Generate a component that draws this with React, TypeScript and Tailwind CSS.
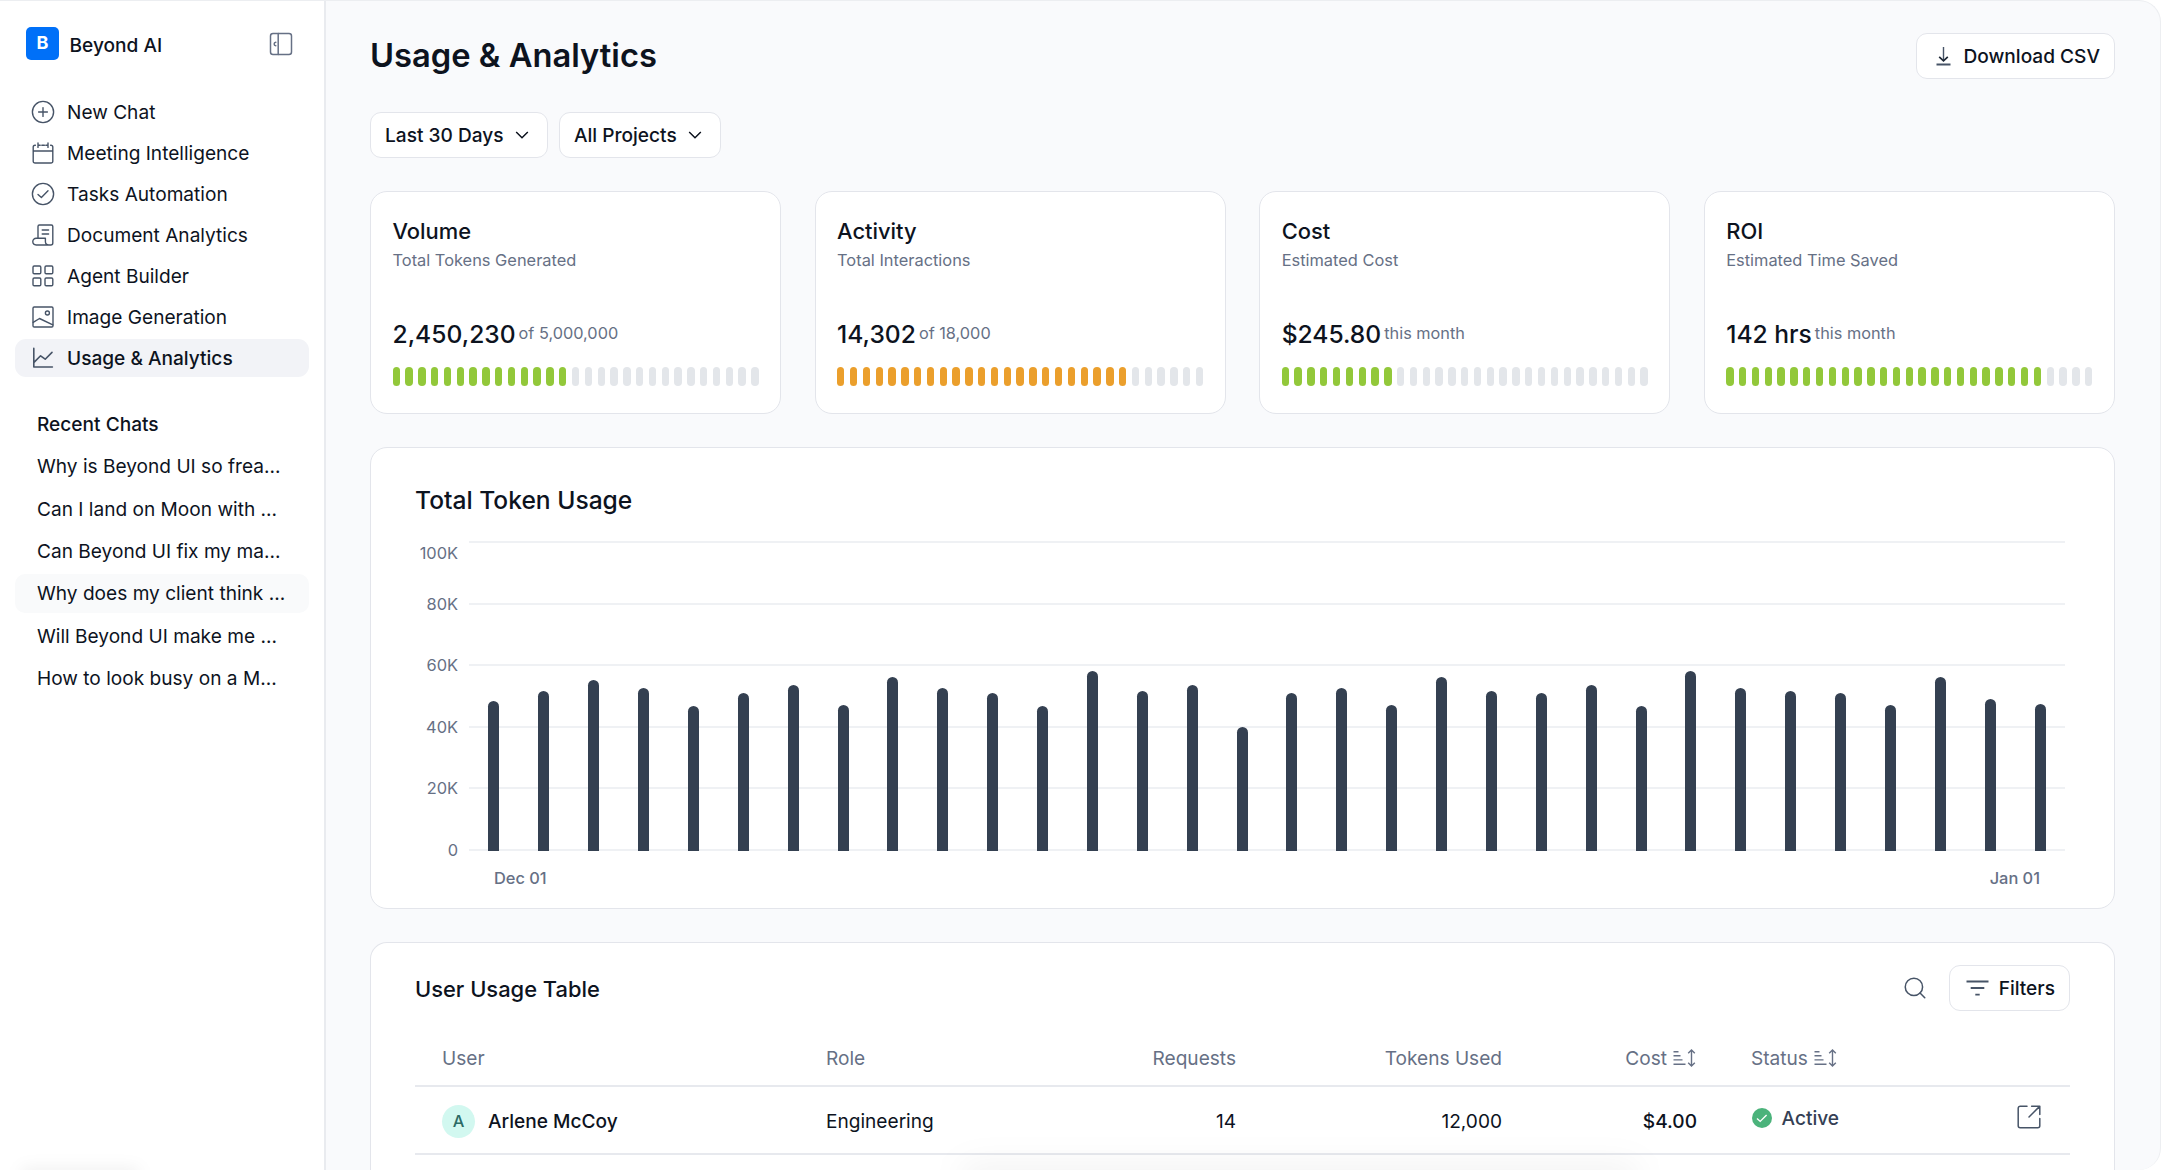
import type { ReactNode } from "react";
import { Search } from "lucide-react";

type IconProps = { className?: string };

function Svg({
  children,
  className = "size-[24px]",
  strokeWidth = 1.4,
}: {
  children: ReactNode;
  className?: string;
  strokeWidth?: number;
}) {
  return (
    <svg
      className={`shrink-0 ${className}`}
      viewBox="0 0 24 24"
      fill="none"
      stroke="currentColor"
      strokeWidth={strokeWidth}
      strokeLinecap="round"
      strokeLinejoin="round"
    >
      {children}
    </svg>
  );
}

const SidebarIcon = ({ className }: IconProps) => (
  <Svg className={className} strokeWidth={1.5}>
    <rect x="1.5" y="1.5" width="21" height="21" rx="2.5" />
    <path d="M9.2 1.5v21M6.8 10.2C4.6 10.4 4.6 13.6 6.8 13.8" />
  </Svg>
);

const NewChatIcon = () => (
  <Svg>
    <circle cx="12" cy="12" r="10.6" />
    <path d="M12 7.6v8.8M7.6 12h8.8" />
  </Svg>
);

const MeetingIcon = () => (
  <Svg>
    <path d="M4.4 4.2H4a1.8 1.8 0 0 0-1.8 1.8v14.2A1.8 1.8 0 0 0 4 22h16a1.8 1.8 0 0 0 1.8-1.8V6A1.8 1.8 0 0 0 20 4.2h-.4M2.2 10h19.6M7 2v4.4M17 2v4.4M7 4.2h2.2M10.8 4.2h2.6M14.8 4.2H17" />
  </Svg>
);

const TasksIcon = () => (
  <Svg>
    <circle cx="12" cy="12" r="10.6" />
    <path d="m7 12.4 3.4 3.2 6.6-6.8" />
  </Svg>
);

const DocumentIcon = () => (
  <Svg>
    <path d="M7 15V3.4A1.4 1.4 0 0 1 8.4 2h12a1.4 1.4 0 0 1 1.4 1.4V20a2 2 0 0 1-2 2H5.2a3.2 3.2 0 0 1 0-6.800h9.200v3.400a3.400 3.400 0 0 0 3.400 3.400M11.200 7h6.400M11.200 11h6.400" />
  </Svg>
);

const AgentIcon = () => (
  <Svg>
    <rect x="2" y="2" width="7.8" height="7.8" rx="1.2" />
    <rect x="14" y="2" width="7.8" height="7.8" rx="1.2" />
    <rect x="2" y="14" width="7.8" height="7.8" rx="1.2" />
    <rect x="14" y="14" width="7.8" height="7.8" rx="1.2" />
  </Svg>
);

const ImageIcon = () => (
  <Svg>
    <rect x="2" y="2" width="20" height="20" rx="1.2" />
    <circle cx="16.4" cy="8" r="2" />
    <path d="m2.2 17.4 6.3-3.900 13.300 6.300" />
  </Svg>
);

const UsageIcon = () => (
  <Svg strokeWidth={1.6}>
    <path d="M2.8 2.4V21h18.6M3 16.4l6.6-6.600 4.600 3.400L21 6.400" />
  </Svg>
);

const ChevronIcon = () => (
  <svg className="size-[20px]" viewBox="0 0 20 20" fill="none" stroke="currentColor" strokeWidth="1.5">
    <path d="m4.2 7 5.8 5.7L15.8 7" />
  </svg>
);

const DownloadIcon = () => (
  <svg className="h-[19px] w-[15px]" viewBox="0 0 15 19" fill="none" stroke="currentColor">
    <path d="M7.5 0v13.6" strokeWidth="1.4" />
    <path d="m3.2 9.800 4.300 4 4.300-4" stroke="#1d2735" strokeWidth="1.7" />
    <path d="M.5 17.4h14" strokeWidth="2" />
  </svg>
);

const FilterIcon = () => (
  <svg className="h-[16px] w-[23px]" viewBox="0 0 23 16" fill="none" stroke="currentColor" strokeWidth="1.8">
    <path d="M.5 1.5h22M4.7 8h13.600M9.300 14.600h4.400" />
  </svg>
);

const SortIcon = () => (
  <svg className="h-[18px] w-[23px]" viewBox="0 0 23 18" fill="none" stroke="currentColor" strokeWidth="1.4">
    <path d="M.5 2.7h5M.5 6.8h7M.5 10.9h9M.5 15.300h12" />
    <path d="M18.5 1.2v15.600M15.200 4.200l3.300-3.200 3.300 3.200M15.200 13.800l3.300 3.200 3.300-3.200" />
  </svg>
);

const OpenIcon = () => (
  <Svg strokeWidth={1.5}>
    <path d="M10 1.2H3.2a2 2 0 0 0-2 2v17.600a2 2 0 0 0 2 2h17.600a2 2 0 0 0 2-2V13.400M14.600 1.200h8.200v8.400M22.600 1.400 12 12" />
  </Svg>
);

const CheckIcon = () => (
  <svg className="size-[20px]" viewBox="0 0 20 20" fill="none">
    <circle cx="10" cy="10" r="10" fill="#4bb37b" />
    <path d="m5 10.4 3.2 3 6.400-6.400" stroke="#fff" strokeWidth="1.4" />
  </svg>
);

const NAV = [
  { label: "New Chat", icon: <NewChatIcon /> },
  { label: "Meeting Intelligence", icon: <MeetingIcon /> },
  { label: "Tasks Automation", icon: <TasksIcon /> },
  { label: "Document Analytics", icon: <DocumentIcon /> },
  { label: "Agent Builder", icon: <AgentIcon /> },
  { label: "Image Generation", icon: <ImageIcon /> },
  { label: "Usage & Analytics", icon: <UsageIcon />, active: true },
];

const CHATS = [
  "Why is Beyond UI so frea...",
  "Can I land on Moon with ...",
  "Can Beyond UI fix my ma...",
  "Why does my client think ...",
  "Will Beyond UI make me ...",
  "How to look busy on a M...",
];

const METER_BARS = 29;

const STATS = [
  { title: "Volume", desc: "Total Tokens Generated", value: "2,450,230", note: "of 5,000,000", filled: 14, color: "bg-[#92c83a]" },
  { title: "Activity", desc: "Total Interactions", value: "14,302", note: "of 18,000", filled: 23, color: "bg-[#eb9f2c]" },
  { title: "Cost", desc: "Estimated Cost", value: "$245.80", note: "this month", filled: 9, color: "bg-[#92c83a]" },
  { title: "ROI", desc: "Estimated Time Saved", value: "142 hrs", note: "this month", filled: 25, color: "bg-[#92c83a]" },
];

// thousands of tokens per day
const TOKENS = [
  48.3, 51.5, 55.2, 52.6, 46.8, 50.9, 53.5, 47.2, 56.1, 52.6, 50.9, 46.8, 58.1, 51.5, 53.5, 39.9,
  50.9, 52.6, 47.2, 56.1, 51.5, 50.9, 53.5, 46.8, 58.1, 52.6, 51.5, 50.9, 47.2, 56.1, 49, 47.5,
];

function Sidebar() {
  return (
    <aside className="flex w-[326px] shrink-0 flex-col border-r-2 border-[#e9ebef] bg-white px-[15px] pt-[26px]">
      <div className="flex h-[33px] items-center pr-[16px] pl-[11px]">
        <div className="flex size-[33px] items-center justify-center rounded-[5px] bg-[#0070f8] pb-[2px] text-[18px] font-bold text-white">
          B
        </div>
        <span className="mt-[4px] ml-[10.5px] text-[19.1px] font-medium">Beyond AI</span>
        <SidebarIcon className="ml-auto size-[24px] text-[#667085]" />
      </div>

      <nav className="mt-[33px] flex flex-col gap-[3px]">
        {NAV.map((item) => (
          <a
            key={item.label}
            className={`flex h-[38px] items-center gap-[12px] rounded-[11px] pl-[16px] text-[19.1px] ${
              item.active ? "bg-[#f2f3f7] font-medium" : ""
            }`}
          >
            <span className="text-[#475467]">{item.icon}</span>
            {item.label}
          </a>
        ))}
      </nav>

      <h2 className="mt-[32px] pl-[22px] text-[19.1px] leading-[30px] font-medium">Recent Chats</h2>
      <ul className="mt-[8px] flex flex-col gap-[2.9px]">
        {CHATS.map((chat, i) => (
          <li
            key={chat}
            className={`flex h-[39.4px] items-center rounded-[10px] pl-[22px] text-[19.1px] whitespace-nowrap ${
              i === 3 ? "bg-[#f9fafb]" : ""
            }`}
          >
            {chat}
          </li>
        ))}
      </ul>
    </aside>
  );
}

function Dropdown({ label }: { label: string }) {
  return (
    <button className="flex h-[46px] items-center gap-[8.5px] rounded-[11px] border border-[#e3e5eb] bg-white pr-[15px] pl-[14px] text-[19.1px] font-medium">
      {label}
      <ChevronIcon />
    </button>
  );
}

function StatCard({ stat }: { stat: (typeof STATS)[number] }) {
  return (
    <div className="h-[223px] rounded-[17px] border border-[#e3e5eb] bg-white px-[21.5px] pt-[23.5px]">
      <h3 className="text-[21.9px] leading-[30px] font-medium">{stat.title}</h3>
      <p className="mt-[3px] text-[16.4px] leading-[22px] text-[#667085]">{stat.desc}</p>
      <div className="mt-[46px] flex items-center gap-[3px]">
        <span className="text-[24.6px] leading-[34px] font-medium">{stat.value}</span>
        <span className="text-[16.3px] text-[#667085]">{stat.note}</span>
      </div>
      <div className="mt-[16.5px] flex justify-between">
        {Array.from({ length: METER_BARS }, (_, i) => (
          <span
            key={i}
            className={`h-[19px] w-[7.4px] rounded-full ${i < stat.filled ? stat.color : "bg-[#e3e6ea]"}`}
          />
        ))}
      </div>
    </div>
  );
}

function UsageChart() {
  return (
    <section className="mt-[33px] h-[462px] rounded-[17px] border border-[#e3e5eb] bg-white pt-[35px] pr-[49px] pl-[44px]">
      <h2 className="text-[24.6px] leading-[34px] font-medium">Total Token Usage</h2>
      <div className="mt-[24px] flex">
        <div className="flex h-[309px] w-[54px] flex-col justify-between pr-[11px] text-right text-[16.4px] leading-[1px] text-[#667085]">
          <span className="mt-[12px]">100K</span>
          <span className="mt-[-11px]">80K</span>
          <span>60K</span>
          <span>40K</span>
          <span>20K</span>
          <span className="mb-[-1px]">0</span>
        </div>
        <div className="grid h-[310px] flex-1">
          <div className="col-start-1 row-start-1 flex flex-col justify-between">
            {[100, 80, 60, 40, 20, 0].map((tick) => (
              <div key={tick} className="h-[2px] bg-[#eff1f4]" />
            ))}
          </div>
          <div className="col-start-1 row-start-1 flex items-end">
            {TOKENS.map((value, i) => (
              <div key={i} className="flex h-full flex-1 items-end justify-center">
                <div className="w-[11px] rounded-t-full bg-[#344051]" style={{ height: `${value}%` }} />
              </div>
            ))}
          </div>
        </div>
      </div>
      <div className="mt-[15px] flex justify-between pr-[25px] pl-[79px] text-[16.4px] leading-[24px] font-medium text-[#667085]">
        <span>Dec 01</span>
        <span>Jan 01</span>
      </div>
    </section>
  );
}

function UsageTable() {
  return (
    <section className="mt-[33px] h-[240px] rounded-t-[17px] border border-b-0 border-[#e3e5eb] bg-white px-[44px] pt-[22px]">
      <div className="flex h-[46px] items-center">
        <h2 className="mt-[2px] text-[21.9px] font-medium">User Usage Table</h2>
        <Search className="ml-auto size-[26px] text-[#475467]" strokeWidth={1.4} />
        <button className="ml-[21px] flex h-[46px] items-center gap-[10px] rounded-[11px] border border-[#e3e5eb] pr-[14px] pl-[16px] text-[19.1px] font-medium">
          <span className="text-[#475467]">
            <FilterIcon />
          </span>
          Filters
        </button>
      </div>
      <table className="mt-[19px] w-full table-fixed text-[19.1px]">
        <colgroup>
          <col className="w-[383px]" />
          <col className="w-[200px]" />
          <col className="w-[264px]" />
          <col className="w-[266px]" />
          <col className="w-[195px]" />
          <col className="w-[200px]" />
          <col />
        </colgroup>
        <thead>
          <tr className="h-[56px] border-b-[2px] border-[#e7e9ee] text-[#667085]">
            <th className="pt-[2px] pl-[27px] text-left font-normal">User</th>
            <th className="pt-[2px] pl-[28px] text-left font-normal">Role</th>
            <th className="pt-[2px] pr-[26px] text-right font-normal">Requests</th>
            <th className="pt-[2px] pr-[26px] text-right font-normal">Tokens Used</th>
            <th className="pt-[2px] pr-[27px] font-normal">
              <span className="flex items-center justify-end gap-[6px]">
                Cost <SortIcon />
              </span>
            </th>
            <th className="pt-[2px] pl-[28px] font-normal">
              <span className="flex items-center gap-[6px]">
                Status <SortIcon />
              </span>
            </th>
            <th />
          </tr>
        </thead>
        <tbody>
          <tr className="h-[68px] border-b-[2px] border-[#e7e9ee]">
            <td className="pt-[2px] pl-[27px]">
              <div className="flex items-center gap-[13px] font-medium">
                <span className="flex size-[33px] items-center justify-center rounded-full bg-[#d2f8f0] text-[16.4px] text-[#2b6b65]">
                  A
                </span>
                Arlene McCoy
              </div>
            </td>
            <td className="pt-[2px] pl-[28px]">Engineering</td>
            <td className="pt-[2px] pr-[26px] text-right">14</td>
            <td className="pt-[2px] pr-[26px] text-right">12,000</td>
            <td className="pt-[2px] pr-[26px] text-right font-medium">$4.00</td>
            <td className="pl-[29px]">
              <span className="flex items-center gap-[9.5px] pb-[4px] font-medium text-[#344054]">
                <CheckIcon /> Active
              </span>
            </td>
            <td className="pr-[29px] pb-[7px]">
              <span className="flex justify-end text-[#475467]">
                <OpenIcon />
              </span>
            </td>
          </tr>
        </tbody>
      </table>
    </section>
  );
}

export default function App() {
  return (
    <div className="h-[1170px] w-[2162px] overflow-hidden bg-white font-['Inter',sans-serif] text-[#0d131e]">
      <div className="relative flex h-[1170px] w-[2161px] overflow-hidden rounded-r-[22px] border-t border-r border-[#eceef1] bg-[#f9fafc]">
        <Sidebar />
        <main className="flex-1 pt-[32px] pr-[45px] pl-[44px]">
          <header className="flex h-[46px] items-center justify-between">
            <h1 className="text-[32.7px] font-semibold">Usage &amp; Analytics</h1>
            <button className="flex h-[46px] items-center gap-[13px] rounded-[11px] border border-[#e3e5eb] bg-white pr-[14px] pl-[19px] text-[19.1px] font-medium">
              <span className="text-[#475467]">
                <DownloadIcon />
              </span>
              Download CSV
            </button>
          </header>
          <div className="mt-[33px] flex gap-[11px]">
            <Dropdown label="Last 30 Days" />
            <Dropdown label="All Projects" />
          </div>
          <div className="mt-[33px] grid grid-cols-4 gap-[33.3px]">
            {STATS.map((stat) => (
              <StatCard key={stat.title} stat={stat} />
            ))}
          </div>
          <UsageChart />
          <UsageTable />
        </main>
        {/* soft shadows rising from the bottom edge */}
        <div className="pointer-events-none absolute -bottom-[24px] left-[960px] h-[30px] w-[680px] rounded-full bg-black/5 blur-[16px]" />
        <div className="pointer-events-none absolute -bottom-[14px] left-[20px] h-[16px] w-[120px] rounded-full bg-black/6 blur-[8px]" />
      </div>
    </div>
  );
}
